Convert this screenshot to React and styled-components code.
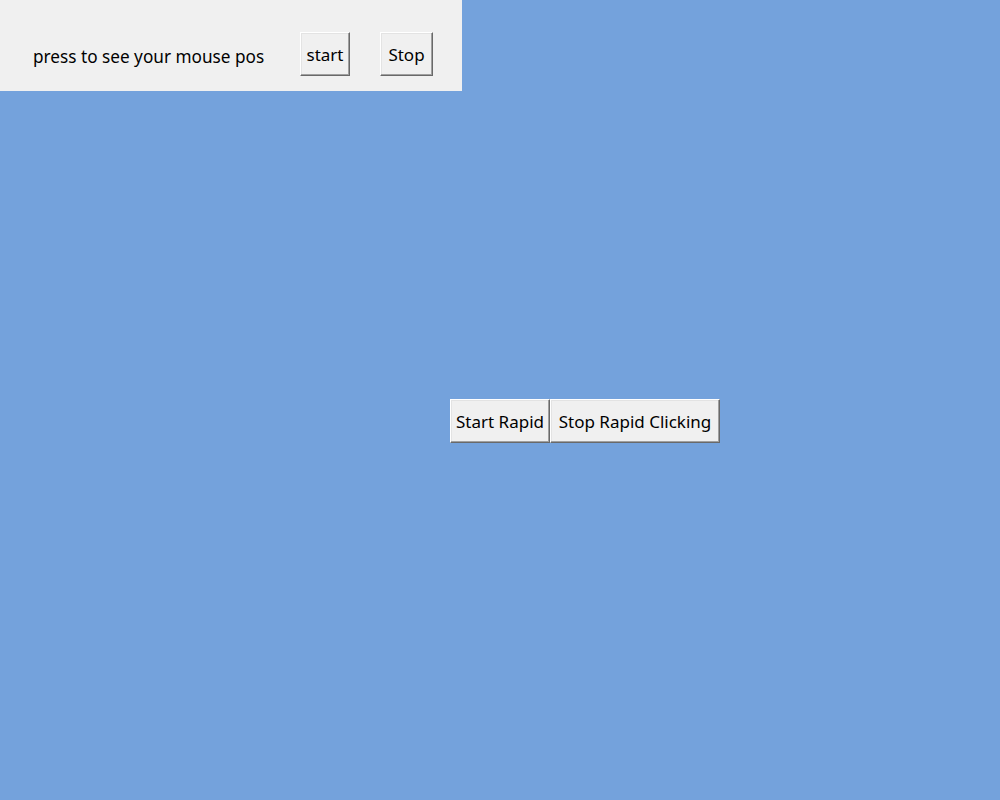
import React from 'react';
import styled, { createGlobalStyle } from 'styled-components';

const GlobalStyle = createGlobalStyle`
  html, body {
    margin: 0;
    padding: 0;
    background-color: #74a2dc;
    font-family: "Noto Sans", "Open Sans", sans-serif;
  }
`;

export const Page = styled.div`
  width: 1000px;
  height: 800px;
  background-color: #74a2dc;
  display: flex;
  flex-direction: column;
`;

export const TopPanel = styled.div`
  width: 462px;
  height: 91px;
  background-color: #f0f0f0;
  display: flex;
  flex-direction: row;
  align-items: flex-start;
  box-sizing: border-box;
  padding-top: 32px;
`;

export const Label = styled.span`
  margin-left: 33px;
  margin-top: 14px;
  width: 267px;
  font-size: 17.2px;
  line-height: 22px;
  color: #000;
  white-space: nowrap;
`;

export const Button = styled.button`
  box-sizing: border-box;
  height: 44px;
  width: ${(props) => props.w}px;
  margin-left: ${(props) => props.gap || 0}px;
  padding: 1px 0 0 0;
  background-color: #f0f0f0;
  border: 1px solid;
  border-color: #ffffff #696969 #696969 #ffffff;
  box-shadow: inset -1px -1px 0 #a0a0a0, inset 1px 1px 0 #e3e3e3;
  font-family: "Noto Sans", "Open Sans", sans-serif;
  font-size: 17px;
  color: #000;
  cursor: pointer;
`;

export const RapidRow = styled.div`
  display: flex;
  flex-direction: row;
  margin-top: 308px;
  padding-left: 450px;
`;

export default function App() {
  return (
    <Page>
      <GlobalStyle />
      <TopPanel>
        <Label>press to see your mouse pos</Label>
        <Button w={50}>start</Button>
        <Button w={53} gap={30}>Stop</Button>
      </TopPanel>
      <RapidRow>
        <Button w={100}>Start Rapid</Button>
        <Button w={170}>Stop Rapid Clicking</Button>
      </RapidRow>
    </Page>
  );
}
